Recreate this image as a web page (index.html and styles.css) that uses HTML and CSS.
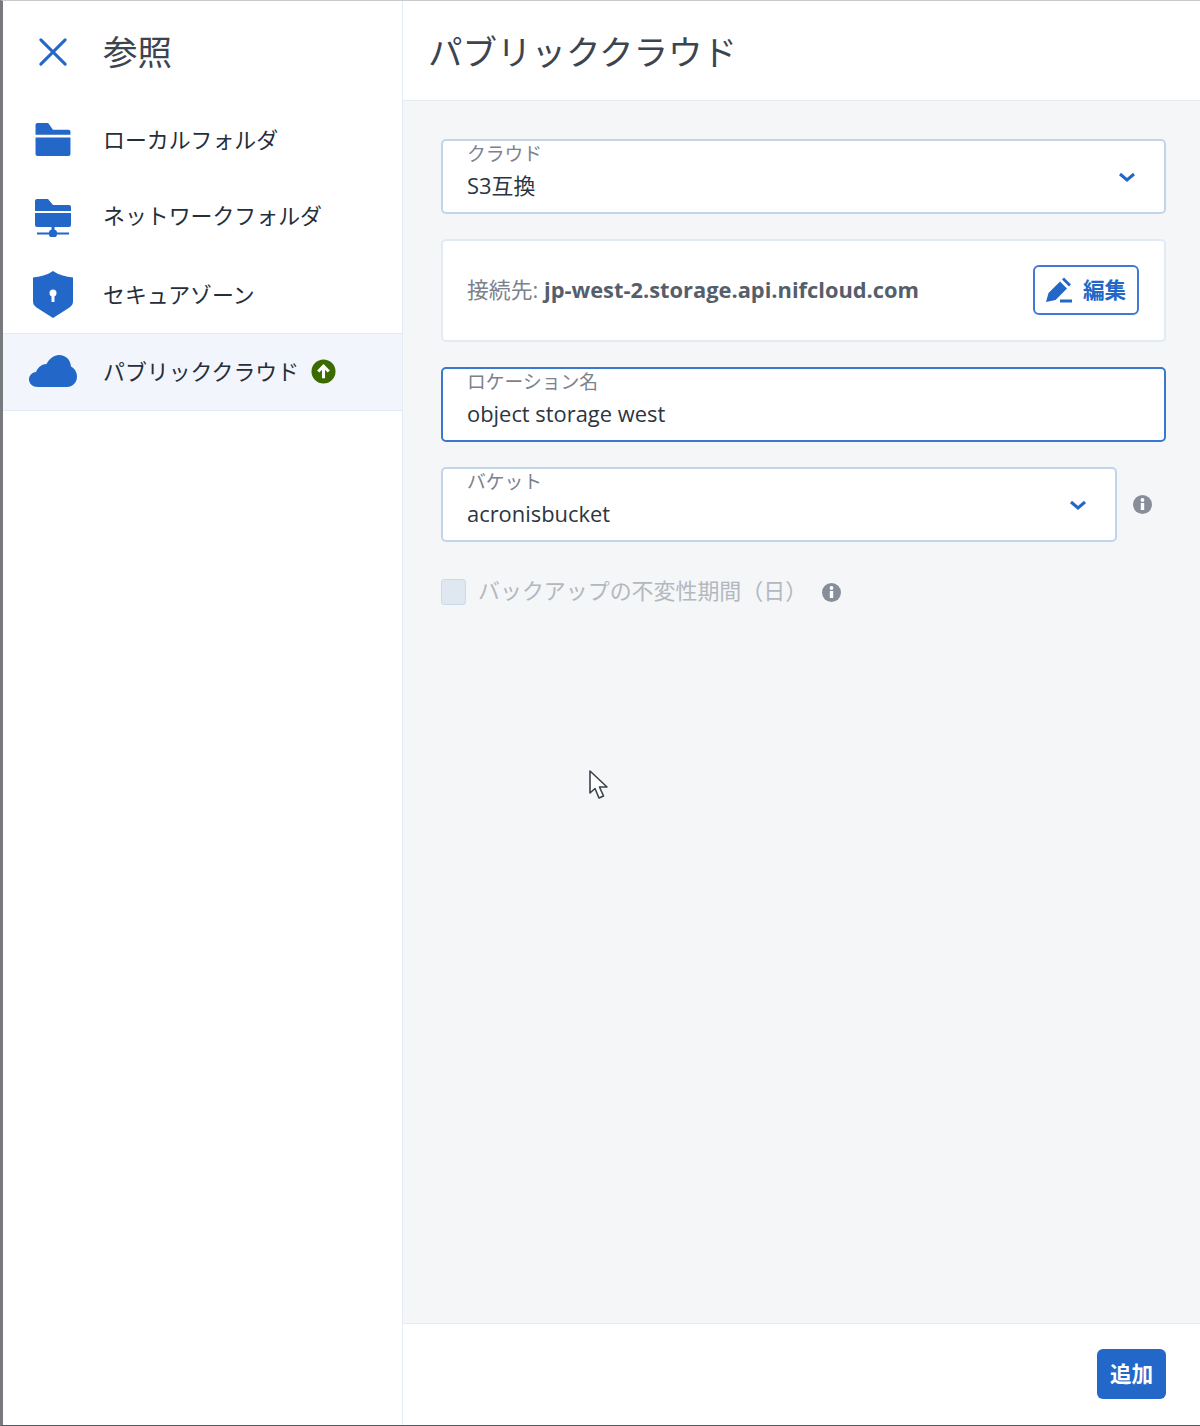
FILE: index.html
```html
<!DOCTYPE html>
<html lang="ja">
<head>
<meta charset="utf-8">
<title>参照</title>
<link rel="stylesheet" href="styles.css">
</head>
<body>
<div class="app">
  <aside class="sidebar">
    <div class="side-head">
      <svg class="close" viewBox="0 0 30 30"><path d="M2 2 L28 28 M28 2 L2 28"/></svg>
      <h1 class="side-title">参照</h1>
    </div>
    <nav class="nav">
      <div class="nav-row row-1">
        <span class="nav-icon"><svg width="36" height="33" viewBox="0 0 36 34"><path class="fill" d="M0 2a2 2 0 0 1 2-2h11l5 7h16a2 2 0 0 1 2 2v3H0z"/><path class="fill" d="M0 15h36v17a2 2 0 0 1-2 2H2a2 2 0 0 1-2-2z"/></svg></span>
        <span class="nav-text">ローカルフォルダ</span>
      </div>
      <div class="nav-row row-2">
        <span class="nav-icon"><svg width="36" height="38" viewBox="0 0 36 38"><path class="fill" d="M0 2a2 2 0 0 1 2-2h11l5 6h16a2 2 0 0 1 2 2v4H0z"/><path class="fill" d="M0 14h36v12a2 2 0 0 1-2 2H2a2 2 0 0 1-2-2z"/><path class="fill" d="M16.500 28h3v4h-3zM2 33.500h12a4 3 0 0 1 8 0h12v2H22a4 3 0 0 1-8 0H2z"/></svg></span>
        <span class="nav-text">ネットワークフォルダ</span>
      </div>
      <div class="nav-row row-3">
        <span class="nav-icon"><svg width="42" height="48" viewBox="0 0 42 48"><path class="fill" d="M21 0c6 4 13 6 20 6.500V30c0 3-1 4.500-3.500 6.500L21 47 4.500 36.500C2 34.500 1 33 1 30V6.500C8 6 15 4 21 0z"/><circle cx="21" cy="22" r="3.500" fill="#fff"/><rect x="19.500" y="22" width="3" height="9" fill="#fff"/></svg></span>
        <span class="nav-text">セキュアゾーン</span>
      </div>
      <div class="nav-row row-4 active">
        <span class="nav-icon"><svg width="48" height="32" viewBox="0 0 48 32"><path class="fill" d="M9 32C3.500 32 0 28.500 0 24.500 0 20.500 3 17.500 7 17c2-5 6-8 10.500-8C20.500 3.500 25 0 30 0c7 0 11.500 5 12 11.500 3.500 2 6 5.500 6 10C48 27.500 43.500 32 38 32z"/></svg></span>
        <span class="nav-text">パブリッククラウド</span>
        <svg class="badge" width="25" height="25" viewBox="0 0 26 26"><circle cx="13" cy="13" r="12.500" fill="#3b6b00"/><path d="M13 20V8M7.500 13 13 7.500 18.500 13" fill="none" stroke="#fff" stroke-width="3.200"/></svg>
      </div>
    </nav>
  </aside>
  <main class="main">
    <header class="main-head"><h2 class="main-title">パブリッククラウド</h2></header>
    <section class="content">
      <div class="field">
        <div class="field-body"><span class="label">クラウド</span><span class="value">S3互換</span></div>
        <svg class="chev" width="18" height="10" viewBox="0 0 18 10"><path d="M2 2 9 8 16 2"/></svg>
      </div>
      <div class="conn">
        <span class="conn-text"><span class="conn-label">接続先:</span> <b class="conn-host">jp-west-2.storage.api.nifcloud.com</b></span>
        <button class="edit" type="button">
          <svg width="26" height="26" viewBox="0 0 26 26"><path class="fill" d="M0 25l2.500-9L14 4.500l7 7L9.500 23zM16 2.500 18 .5l7 7-2 2z"/><rect class="fill" x="14" y="22.500" width="12" height="3"/></svg>
          <span class="btn-text">編集</span>
        </button>
      </div>
      <div class="field focused">
        <div class="field-body"><span class="label">ロケーション名</span><span class="value">object storage west</span></div>
      </div>
      <div class="with-info">
        <div class="field grow">
          <div class="field-body"><span class="label">バケット</span><span class="value">acronisbucket</span></div>
          <svg class="chev" width="18" height="10" viewBox="0 0 18 10"><path d="M2 2 9 8 16 2"/></svg>
        </div>
        <svg class="info" width="19" height="19" viewBox="0 0 19 19"><circle cx="9.500" cy="9.500" r="9.500" fill="#878e99"/><rect x="7.800" y="8" width="3.400" height="7" fill="#fff"/><circle cx="9.500" cy="5" r="1.900" fill="#fff"/></svg>
      </div>
      <div class="check-row">
        <span class="check"></span>
        <span class="check-text">バックアップの不変性期間（日）</span>
        <svg class="info" width="19" height="19" viewBox="0 0 19 19"><circle cx="9.500" cy="9.500" r="9.500" fill="#878e99"/><rect x="7.800" y="8" width="3.400" height="7" fill="#fff"/><circle cx="9.500" cy="5" r="1.900" fill="#fff"/></svg>
      </div>
      <svg class="cursor" width="22" height="32" viewBox="0 0 22 32"><path d="M2 2 V24 L7 19.500 L11 29 L15.500 27 L11.500 18 H19 Z" fill="#fff" stroke="#3c424c" stroke-width="1.600" stroke-linejoin="round"/></svg>
    </section>
    <footer class="main-foot"><button class="add" type="button"><span class="btn-text">追加</span></button></footer>
  </main>
</div>
</body>
</html>
```
FILE: styles.css
```css
* { box-sizing: border-box; }
html, body { margin: 0; height: 100%; }
body {
  font-family: "Open Sans", "Noto Sans CJK JP", sans-serif;
  background: #fff;
  color: #2b3543;
  overflow: hidden;
}
.app {
  display: flex;
  height: 1426px;
  border-left: 3px solid #77797d;
  border-top: 1px solid #c9cacc;
  border-bottom: 1px solid #55585c;
}
.fill { fill: #2367c8; }

.sidebar {
  width: 400px;
  flex: none;
  border-right: 1px solid #e3ebf5;
  background: #fff;
}
.side-head {
  display: flex;
  align-items: center;
  height: 100px;
  padding: 2px 0 0 36px;
}
.close { width: 28px; height: 28px; margin-right: 36px; fill: none; stroke: #2367c8; stroke-width: 3.200; stroke-linecap: round; }
.side-title { margin: 0; font-size: 34.500px; font-weight: 400; color: #3c4450; line-height: 1; }

.nav-row {
  display: flex;
  align-items: center;
}
.row-1, .row-2 { height: 76px; }
.row-2 .nav-icon { padding-top: 6px; }
.row-3 { height: 80px; padding-top: 2px; }
.row-3 .nav-icon { padding-top: 2px; }
.active {
  height: 78px;
  padding-bottom: 2px;
  background: #f2f6fc;
  border-top: 1px solid #e3ebf5;
  border-bottom: 1px solid #e3ebf5;
}
.nav-icon {
  width: 100px;
  flex: none;
  display: flex;
  justify-content: center;
  padding-right: 1px;
}
.nav-text { font-size: 21.900px; color: #252e3a; padding-bottom: 2px; }
.badge { margin-left: 12px; }

.main { flex: 1; display: flex; flex-direction: column; min-width: 0; }
.main-head {
  height: 100px;
  flex: none;
  display: flex;
  align-items: center;
  padding: 4px 0 0 25px;
  border-bottom: 1px solid #e6ebf2;
}
.main-title { margin: 0; font-size: 34.500px; font-weight: 400; color: #3c4450; line-height: 1; }

.content {
  flex: 1;
  position: relative;
  background: #f4f6f8;
  padding: 38px 34px 0 38px;
  display: flex;
  flex-direction: column;
  gap: 25px;
}
.field {
  height: 75px;
  display: flex;
  align-items: center;
  background: #fff;
  border: 2px solid #c1d4ec;
  border-radius: 5px;
  padding: 0 28px 0 24px;
}
.focused { border-color: #3a78d0; }
.field-body { flex: 1; display: flex; flex-direction: column; margin-top: -9px; }
.label { font-size: 18.800px; line-height: 24px; color: #7b828d; }
.value { font-size: 21.900px; line-height: 34px; color: #2b3543; margin-top: 3px; }
.chev { fill: none; stroke: #2367c8; stroke-width: 3; }

.conn {
  height: 103px;
  display: flex;
  align-items: center;
  justify-content: space-between;
  background: #fff;
  border: 2px solid #e2eaf5;
  border-radius: 5px;
  padding: 0 25px 2px 24px;
}
.conn-text { font-size: 21.850px; color: #7b828d; padding-bottom: 2px; }
.conn-host { color: #555e6b; font-weight: 700; }
.edit {
  width: 106px;
  height: 50px;
  display: flex;
  align-items: center;
  justify-content: center;
  gap: 11px;
  background: #fff;
  border: 2px solid #3f7bd2;
  border-radius: 6px;
  color: #2367c8;
  font: 700 21.600px "Open Sans", "Noto Sans CJK JP", sans-serif;
  padding: 0;
}
.btn-text { display: block; padding-bottom: 3px; }

.with-info { display: flex; align-items: center; gap: 16px; padding-right: 14px; }
.grow { flex: 1; padding-right: 28px; }

.check-row { display: flex; align-items: center; margin-top: 12px; height: 26px; }
.check { width: 25px; height: 26px; background: #dfe7f1; border: 1px solid #ccdaeb; border-radius: 3px; margin-right: 12px; }
.check-text { font-size: 21.950px; color: #b3b8bf; margin-right: 15px; padding-bottom: 5px; }

.cursor { position: absolute; left: 185px; top: 668px; }

.main-foot {
  height: 102px;
  flex: none;
  display: flex;
  justify-content: flex-end;
  align-items: flex-start;
  padding: 25px 34px 0 0;
  border-top: 1px solid #e6ebf2;
}
.add {
  width: 69px;
  height: 50px;
  background: #2367c8;
  color: #fff;
  border: 0;
  border-radius: 6px;
  font: 700 21.600px "Open Sans", "Noto Sans CJK JP", sans-serif;
  padding: 0;
}
```
